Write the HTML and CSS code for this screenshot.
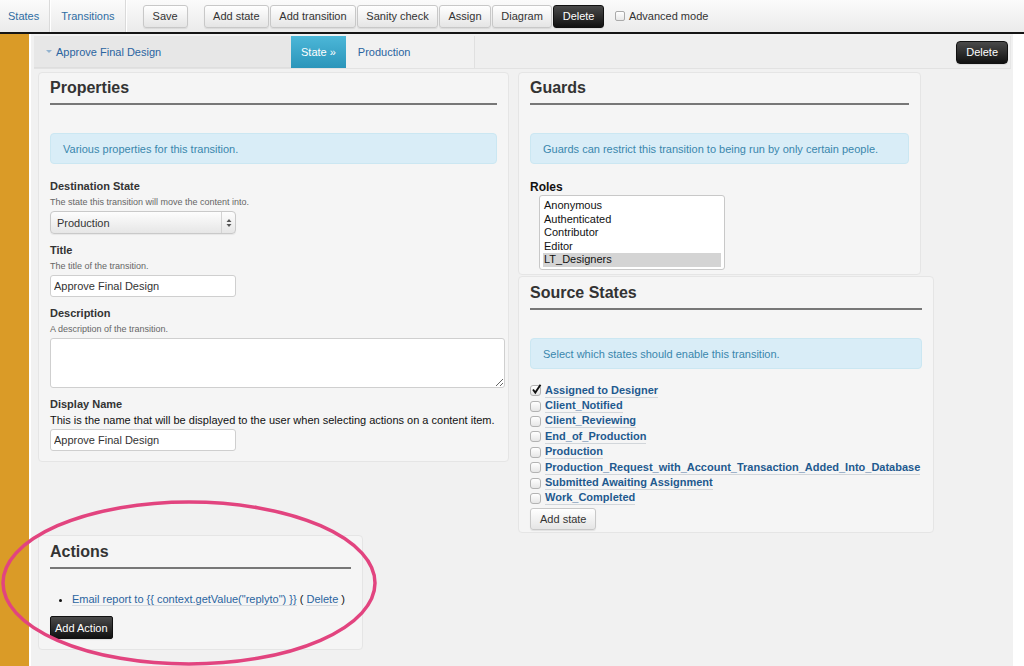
FILE: index.html
```html
<!DOCTYPE html>
<html>
<head>
<meta charset="utf-8">
<title>Transition editor</title>
<link rel="stylesheet" href="styles.css">
</head>
<body>
<div class="topbar">
  <nav class="navtabs">
    <a class="navtab nav-states">States</a>
    <a class="navtab nav-trans">Transitions</a>
  </nav>
  <button class="btn save">Save</button>
  <div class="btngroup">
    <button class="btn">Add state</button>
    <button class="btn">Add transition</button>
    <button class="btn">Sanity check</button>
    <button class="btn">Assign</button>
    <button class="btn">Diagram</button>
    <button class="btn dark">Delete</button>
  </div>
  <label class="adv"><span class="cb"></span>Advanced mode</label>
</div>
<div class="layout">
  <div class="sidebar"></div>
  <div class="main">
    <div class="header">
      <div class="crumbs">
        <a class="crumb"><span class="caret"></span>Approve Final Design</a>
        <span class="tab active">State »</span>
        <a class="tab">Production</a>
      </div>
      <button class="btn dark hdel">Delete</button>
    </div>
    <div class="columns">
      <section class="panel props">
        <h2>Properties</h2>
        <div class="info">Various properties for this transition.</div>
        <div class="field first">
          <div class="lbl">Destination State</div>
          <div class="help">The state this transition will move the content into.</div>
          <div class="select"><span class="selval">Production</span><span class="arrows"><svg width="6" height="10" viewBox="0 0 6 10"><path d="M3 1 L5.5 4 H0.5 Z M3 9 L5.5 6 H0.5 Z" fill="#555"/></svg></span></div>
        </div>
        <div class="field">
          <div class="lbl">Title</div>
          <div class="help">The title of the transition.</div>
          <input class="input" type="text" value="Approve Final Design">
        </div>
        <div class="field">
          <div class="lbl">Description</div>
          <div class="help">A description of the transition.</div>
          <textarea class="textarea"></textarea>
        </div>
        <div class="field last">
          <div class="lbl">Display Name</div>
          <div class="help big">This is the name that will be displayed to the user when selecting actions on a content item.</div>
          <input class="input" type="text" value="Approve Final Design">
        </div>
      </section>
      <div class="rightcol">
        <section class="panel guards">
          <h2>Guards</h2>
          <div class="info">Guards can restrict this transition to being run by only certain people.</div>
          <div class="roles-lbl">Roles</div>
          <div class="listbox">
            <div class="opt">Anonymous</div>
            <div class="opt">Authenticated</div>
            <div class="opt">Contributor</div>
            <div class="opt">Editor</div>
            <div class="opt sel">LT_Designers</div>
          </div>
        </section>
        <section class="panel sources">
          <h2>Source States</h2>
          <div class="info">Select which states should enable this transition.</div>
          <ul class="statelist">
            <li><span class="box checked"><svg width="11" height="11" viewBox="0 0 11 11"><path d="M2 5.5 L4.3 8.5 L9.5 0.8" fill="none" stroke="#111" stroke-width="1.9"/></svg></span><a>Assigned to Designer</a></li>
            <li><span class="box"></span><a>Client_Notified</a></li>
            <li><span class="box"></span><a>Client_Reviewing</a></li>
            <li><span class="box"></span><a>End_of_Production</a></li>
            <li><span class="box"></span><a>Production</a></li>
            <li><span class="box"></span><a>Production_Request_with_Account_Transaction_Added_Into_Database</a></li>
            <li><span class="box"></span><a>Submitted Awaiting Assignment</a></li>
            <li><span class="box"></span><a>Work_Completed</a></li>
          </ul>
          <button class="btn addstate">Add state</button>
        </section>
      </div>
    </div>
    <section class="panel actions">
      <h2>Actions</h2>
      <ul class="actlist">
        <li><a class="lnk">Email report to {{ context.getValue("replyto") }}</a> ( <a class="lnk">Delete</a> )</li>
      </ul>
      <button class="btn dark addaction">Add Action</button>
    </section>
  </div>
</div>
<svg class="annot" width="1024" height="666" viewBox="0 0 1024 666">
  <ellipse cx="189" cy="583" rx="186" ry="81" fill="none" stroke="#e2447f" stroke-width="3.5"/>
</svg>
</body>
</html>
```
FILE: styles.css
```css
* { box-sizing: border-box; }
html, body { margin: 0; }
body {
  font-family: "Liberation Sans", Arial, sans-serif;
  font-size: 11px;
  color: #222;
  background: #fff;
  width: 1024px;
  height: 666px;
  overflow: hidden;
  position: relative;
}
a { text-decoration: none; cursor: pointer; }

/* top bar */
.topbar {
  display: flex;
  align-items: center;
  height: 34px;
  border-bottom: 2px solid #151515;
  background: linear-gradient(#fbfbfb, #ebebeb);
}
.navtabs { display: flex; height: 32px; }
.navtab {
  display: block;
  height: 32px;
  line-height: 32px;
  color: #2f6da3;
  border-right: 1px solid #dadada;
  box-shadow: 1px 0 0 #fff;
}
.nav-states { padding: 0 10px 0 8px; }
.nav-trans { padding: 0 10px 0 11px; }
.btn {
  font-family: inherit;
  font-size: 11px;
  color: #333;
  height: 23px;
  padding: 0 8.4px;
  border: 1px solid #c8c8c8;
  border-radius: 3px;
  background: linear-gradient(#fff, #e5e5e5);
  box-shadow: 0 1px 1px rgba(0,0,0,.08);
}
.btn.dark {
  background: linear-gradient(#4a4a4a, #111);
  border-color: #111;
  color: #fff;
}
.save { margin-left: 17px; padding: 0 9px; }
.btngroup { display: flex; gap: 1px; margin-left: 16px; }
.adv { display: flex; align-items: center; margin-left: 11px; color: #333; }
.cb {
  display: inline-block;
  width: 10px;
  height: 10px;
  border: 1px solid #aaa;
  border-radius: 2px;
  background: linear-gradient(#fff, #e8e8e8);
  margin-right: 4px;
}

/* layout */
.layout { display: flex; height: 632px; }
.sidebar { width: 31px; background: #da9b27; border-right: 2px solid #fff; }
.main { width: 982px; background: #f1f1f1; padding: 2px 2px 0 3px; }

.header {
  display: flex;
  align-items: center;
  height: 33px;
  background: #efefef;
  border-bottom: 1px solid #e2e2e2;
  border-right: 1px solid #e6e6e6;
}
.crumbs { display: flex; width: 441px; height: 100%; background: #f1f1f1; border-right: 1px solid #e0e0e0; }
.crumb {
  display: flex;
  align-items: center;
  width: 257px;
  padding-left: 12px;
  color: #2a64a0;
  background: #e7e7e7;
  border-bottom: 1px solid #dedede;
}
.caret {
  width: 0; height: 0;
  border-left: 3px solid transparent;
  border-right: 3px solid transparent;
  border-top: 3px solid #93b3cf;
  margin-right: 4px;
}
.tab { display: flex; align-items: center; padding: 0 12px; color: #2a64a0; }
.tab.active {
  padding: 0 10px;
  color: #fff;
  background: linear-gradient(#4cb7d8, #2b95ba);
}
.hdel { margin-left: auto; margin-right: 2px; border-radius: 4px; padding: 0 9px; }

.columns { display: flex; align-items: flex-start; gap: 9px; margin: 3px 0 0 4px; }
.rightcol { display: flex; flex-direction: column; gap: 1px; }

.panel {
  background: #f5f5f5;
  border: 1px solid #e5e5e5;
  border-radius: 4px;
  padding: 4px 11px 10px;
}
.panel h2 {
  margin: 0;
  font-size: 16px;
  line-height: 24px;
  color: #333;
  padding-bottom: 3px;
  border-bottom: 2px solid #777;
}
.props { width: 471px; padding-top: 3px; }
.guards { width: 403px; padding-top: 3px; padding-bottom: 4px; }
.sources { width: 416px; padding-bottom: 2px; }
.info {
  margin-top: 28px;
  height: 31px;
  display: flex;
  align-items: center;
  padding: 0 12px;
  background: #d9edf7;
  border: 1px solid #cbe7f2;
  border-radius: 4px;
  color: #3a87ad;
}

.field { margin-bottom: 9px; }
.field.first { margin-top: 15px; }
.field.last { margin-bottom: 0; }
.lbl { font-weight: bold; line-height: 14px; color: #333; }
.help { font-size: 9px; color: #666; line-height: 14px; margin-top: 2px; margin-bottom: 2px; }
.help.big { font-size: 11px; color: #111; }
.select {
  display: flex;
  align-items: center;
  width: 186px;
  height: 23px;
  border: 1px solid #c9c9c9;
  border-radius: 4px;
  background: linear-gradient(#fdfdfd, #e6e6e6);
  box-shadow: 0 1px 1px rgba(0,0,0,.06);
  color: #333;
}
.selval { flex: 1; padding-left: 6px; }
.arrows {
  display: flex;
  align-items: center;
  justify-content: center;
  width: 14px;
  height: 100%;
  border-left: 1px solid #d3d3d3;
}
.input {
  display: block;
  width: 186px;
  height: 22px;
  border: 1px solid #cfcfcf;
  border-radius: 3px;
  background: #fff;
  padding: 0 3px;
  font-family: inherit;
  font-size: 11px;
  color: #333;
}
.textarea {
  display: block;
  width: 455px;
  height: 50px;
  border: 1px solid #cfcfcf;
  border-radius: 3px;
  background: #fff;
  font-family: inherit;
  margin: 0;
}

.roles-lbl { margin-top: 16px; font-size: 12px; font-weight: bold; line-height: 14px; color: #111; }
.listbox {
  margin: 1px 0 0 9px;
  width: 186px;
  height: 75px;
  border: 1px solid #c8c8c8;
  border-radius: 3px;
  background: #fff;
  padding: 3px 3px 2px;
}
.opt { line-height: 13.5px; padding-left: 1px; color: #111; }
.opt.sel { background: #d4d4d4; }

.statelist { list-style: none; margin: 14px 0 0; padding: 0; }
.statelist li { display: flex; align-items: center; height: 15.4px; }
.box {
  display: inline-block;
  width: 11px;
  height: 11px;
  border: 1px solid #b3b3b3;
  border-radius: 3px;
  background: linear-gradient(#fff, #e6e6e6);
  margin-right: 4px;
  position: relative;
}
.box.checked svg { position: absolute; left: 0; top: -2px; }
.statelist a {
  font-weight: bold;
  color: #1f5a8f;
  line-height: 13px;
  border-bottom: 1px solid #d2d6da;
}
.addstate { margin-top: 2px; height: 22px; padding: 0 9px; }

.actions { width: 325px; margin: 2px 0 0 4px; }
.actlist { margin: 23px 0 0; padding-left: 22px; line-height: 14px; color: #111; }
.lnk { color: #2a64a0; border-bottom: 1px solid #d6dbe0; }
.addaction { margin-top: 10px; padding: 0 4px; border-radius: 2px; }

.annot { position: absolute; left: 0; top: 0; pointer-events: none; }
```
